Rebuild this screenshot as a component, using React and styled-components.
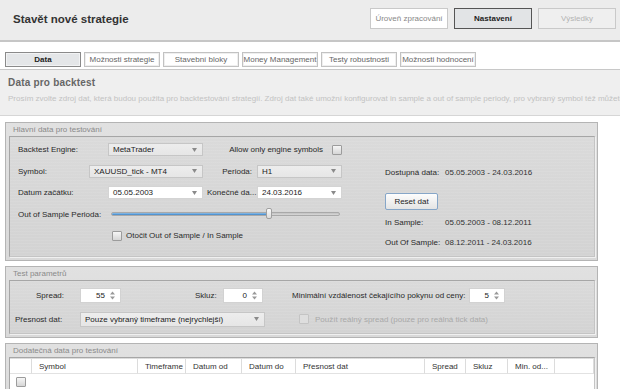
import React from 'react';
import styled, { createGlobalStyle } from 'styled-components';

const GlobalStyle = createGlobalStyle`
  * { box-sizing: border-box; }
  body {
    margin: 0;
    background: #fff;
    font-family: "Liberation Sans", Arial, sans-serif;
    font-size: 8px;
    color: #333;
  }
`;

const Page = styled.div`
  width: 620px;
  height: 389px;
  overflow: hidden;
`;

const Header = styled.div`
  height: 42px;
  display: flex;
  align-items: center;
  justify-content: space-between;
  padding: 0 4px 3px 13px;
  background: #ececec;
  border-bottom: 2px solid #c6c6c6;
`;

const Title = styled.h1`
  margin: 0;
  font-size: 11.5px;
  font-weight: bold;
  color: #333;
`;

const HeaderButtons = styled.div`
  display: flex;
  gap: 6px;
`;

const HeadButton = styled.div`
  width: 78px;
  height: 21px;
  display: flex;
  align-items: center;
  justify-content: center;
  font-size: 8px;
  border: 1px solid ${({ $variant }) => ($variant === 'active' ? '#555' : '#c9c9c9')};
  background: ${({ $variant }) =>
    $variant === 'active' ? '#e2e4e6' : $variant === 'done' ? '#fff' : '#efefef'};
  color: ${({ $variant }) =>
    $variant === 'active' ? '#222' : $variant === 'done' ? '#888' : '#b3b3b3'};
  font-weight: ${({ $variant }) => ($variant === 'active' ? 'bold' : 'normal')};
`;

const TabBar = styled.div`
  display: flex;
  gap: 3px;
  padding: 10px 5px 2px;
  border-bottom: 1px solid #c8c8c8;
`;

const Tab = styled.div`
  width: 76px;
  height: 15px;
  display: flex;
  align-items: center;
  justify-content: center;
  font-size: 8px;
  white-space: nowrap;
  border: 1px solid ${({ $active }) => ($active ? '#8a8a8a' : '#c2c2c2')};
  box-shadow: inset 0 0 0 1px ${({ $active }) => ($active ? '#f2f3f4' : '#efefef')};
  background: ${({ $active }) => ($active ? '#e4e6e8' : '#fff')};
  color: ${({ $active }) => ($active ? '#222' : '#666')};
  font-weight: ${({ $active }) => ($active ? 'bold' : 'normal')};
`;

const Intro = styled.div`
  height: 46px;
  padding: 7px 8px 0;
  background: #efefef;
  border-bottom: 1px solid #d6d6d6;
  overflow: hidden;
`;

const IntroTitle = styled.div`
  font-size: 10px;
  font-weight: bold;
  color: #666;
  letter-spacing: 0.2px;
`;

const IntroText = styled.div`
  margin-top: 6px;
  font-size: 8px;
  color: #c2c2c2;
  white-space: nowrap;
`;

const Panels = styled.div`
  display: flex;
  flex-direction: column;
  gap: 5px;
  margin: 6px 22px 0 5px;
`;

const Panel = styled.div`
  border: 1px solid #b4b4b4;
  background: linear-gradient(#e1e1e1, #d9d9d9);
  padding: 0 2px 3px 3px;
`;

const Caption = styled.div`
  height: 13px;
  line-height: 13px;
  padding-left: 4px;
  font-size: 8px;
  color: #8a8a8a;
`;

const Body = styled.div`
  height: ${({ $h }) => $h}px;
  border: 1px solid #a6a6a6;
  border-right-color: #c4c4c4;
  border-bottom-color: #c4c4c4;
  box-shadow: 1px 1px 0 #f0f0f0;
  background:
    repeating-linear-gradient(0deg, rgba(255, 255, 255, 0.07) 0 1px, transparent 1px 3px),
    linear-gradient(#dadada, #d3d3d3);
  overflow: hidden;
`;

const MainGrid = styled.div`
  display: flex;
`;

const LeftCol = styled.div`
  width: 375px;
  padding: 2px 0 0 8px;
`;

const RightCol = styled.div`
  display: flex;
  flex-direction: column;
  padding-top: 25px;
`;

const Row = styled.div`
  height: ${({ $h }) => $h || 21.5}px;
  display: flex;
  align-items: center;
  padding-left: ${({ $pl }) => $pl || 0}px;
  white-space: nowrap;
`;

const Label = styled.div`
  width: ${({ $w }) => $w}px;
  flex: none;
  color: #2a2a2a;
  text-align: ${({ $right }) => ($right ? 'right' : 'left')};
  padding-right: ${({ $pr }) => $pr || 0}px;
  padding-left: ${({ $pl }) => $pl || 0}px;
  margin-left: ${({ $ml }) => $ml || 0}px;
  overflow: hidden;
`;

const Combo = styled.div`
  width: ${({ $w }) => $w}px;
  height: ${({ $h }) => $h || 13}px;
  flex: none;
  display: flex;
  align-items: center;
  justify-content: space-between;
  padding: 0 5px 0 4px;
  border: 1px solid ${({ $white }) => ($white ? '#d4d4d4' : '#c6c6c6')};
  background: ${({ $white }) => ($white ? '#fff' : 'linear-gradient(#ededed, #e6e6e6)')};
  color: #222;
`;

const Arrow = () => (
  <svg width="5" height="4" viewBox="0 0 5 4">
    <path d="M0 0 L5 0 L2.5 4 Z" fill="#8a8a8a" />
  </svg>
);

const Check = styled.div`
  width: 10px;
  height: 10px;
  flex: none;
  margin-left: ${({ $ml }) => $ml || 0}px;
  border: 1px solid ${({ $disabled }) => ($disabled ? '#c4c4c4' : '#9c9c9c')};
  border-radius: 1px;
  background: ${({ $disabled }) =>
    $disabled ? '#dedede' : 'linear-gradient(#f6f6f6, #d6d6d6)'};
`;

const CheckText = styled.span`
  margin-left: ${({ $ml }) => $ml || 4}px;
  color: ${({ $disabled }) => ($disabled ? '#a9a9a9' : '#2a2a2a')};
`;

const Slider = styled.div`
  width: 229px;
  height: 4px;
  flex: none;
  position: relative;
  border-radius: 2px;
  border: 1px solid #a9a9a9;
  background: linear-gradient(#c2c2c2, #d8d8d8);
`;

const SliderFill = styled.div`
  height: 100%;
  border-radius: 2px;
  background: linear-gradient(#8fc0ea, #3f86c8);
`;

const Thumb = styled.div`
  position: absolute;
  top: -5px;
  width: 6px;
  height: 11px;
  margin-left: -3px;
  border: 1px solid #a0a0a0;
  border-radius: 2px;
  background: linear-gradient(#fbfbfb, #dcdcdc);
`;

const InfoRow = styled.div`
  height: 20px;
  display: flex;
  align-items: center;
  margin-top: ${({ $mt }) => $mt || 0}px;
  white-space: nowrap;
`;

const InfoLabel = styled.div`
  width: 60px;
  color: #2a2a2a;
`;

const ResetButton = styled.div`
  width: 53px;
  height: 17px;
  margin-top: 11px;
  display: flex;
  align-items: center;
  justify-content: center;
  border: 1px solid #86a6c8;
  border-radius: 2px;
  background: linear-gradient(#fdfdfd, #e4e4e4);
  color: #222;
`;

const Spinner = styled.div`
  width: ${({ $w }) => $w}px;
  height: 15px;
  flex: none;
  display: flex;
  align-items: center;
  justify-content: flex-end;
  padding-right: 5px;
  border: 1px solid #d2d2d2;
  background: #fff;
  color: #222;
`;

const SpinArrows = () => (
  <svg width="5" height="9" viewBox="0 0 5 9" style={{ marginLeft: 5 }}>
    <path d="M0 3.5 L2.5 0.5 L5 3.5 Z" fill="#999" />
    <path d="M0 5.5 L2.5 8.5 L5 5.5 Z" fill="#999" />
  </svg>
);

const ParamBody = styled.div`
  padding-top: 2px;
`;

const Table = styled.div`
  margin-top: 1px;
  display: grid;
  grid-template-columns: 22px 106px 48px 56px 54px 129px 41px 42px 47px 1fr;
  background: #fff;
`;

const HeadCell = styled.div`
  height: 15px;
  display: flex;
  align-items: center;
  padding-left: 7px;
  color: #333;
  white-space: nowrap;
  border-right: 1px solid #dcdcdc;
  border-bottom: 1px solid #e2e2e2;
`;

const Cell = styled.div`
  height: 16px;
  display: flex;
  align-items: center;
  padding-left: 6px;
`;

const columns = ['', 'Symbol', 'Timeframe', 'Datum od', 'Datum do', 'Přesnost dat', 'Spread', 'Skluz', 'Min. od...', ''];

const App = () => {
  const sliderPos = 157;

  return (
    <Page>
      <GlobalStyle />
      <Header>
        <Title>Stavět nové strategie</Title>
        <HeaderButtons>
          <HeadButton $variant="done">Úroveň zpracování</HeadButton>
          <HeadButton $variant="active">Nastavení</HeadButton>
          <HeadButton $variant="disabled">Výsledky</HeadButton>
        </HeaderButtons>
      </Header>

      <TabBar>
        <Tab $active>Data</Tab>
        <Tab>Možnosti strategie</Tab>
        <Tab>Stavební bloky</Tab>
        <Tab>Money Management</Tab>
        <Tab>Testy robustnosti</Tab>
        <Tab>Možnosti hodnocení</Tab>
      </TabBar>

      <Intro>
        <IntroTitle>Data pro backtest</IntroTitle>
        <IntroText>
          Prosím zvolte zdroj dat, která budou použita pro backtestování strategií. Zdroj dat také umožní konfigurovat in sample a out of sample periody, pro vybraný symbol též můžete nastavit
        </IntroText>
      </Intro>

      <Panels>
        <Panel>
          <Caption>Hlavní data pro testování</Caption>
          <Body $h={121}>
            <MainGrid>
              <LeftCol>
                <Row>
                  <Label $w={90}>Backtest Engine:</Label>
                  <Combo $w={95}>MetaTrader<Arrow /></Combo>
                  <Label $w={129} $right $pr={9}>Allow only engine symbols</Label>
                  <Check />
                </Row>
                <Row>
                  <Label $w={71}>Symbol:</Label>
                  <Combo $w={114}>XAUUSD_tick - MT4<Arrow /></Combo>
                  <Label $w={54} $right $pr={5}>Perioda:</Label>
                  <Combo $w={85}>H1<Arrow /></Combo>
                </Row>
                <Row>
                  <Label $w={90}>Datum začátku:</Label>
                  <Combo $w={95} $white>05.05.2003<Arrow /></Combo>
                  <Label $w={54} $pl={4}>Konečné da...</Label>
                  <Combo $w={85} $white>24.03.2016<Arrow /></Combo>
                </Row>
                <Row>
                  <Label $w={93}>Out of Sample Perioda:</Label>
                  <Slider>
                    <SliderFill style={{ width: sliderPos }} />
                    <Thumb style={{ left: sliderPos }} />
                  </Slider>
                </Row>
                <Row $pl={94}>
                  <Check />
                  <CheckText>Otočit Out of Sample / In Sample</CheckText>
                </Row>
              </LeftCol>
              <RightCol>
                <InfoRow>
                  <InfoLabel>Dostupná data:</InfoLabel>
                  05.05.2003 - 24.03.2016
                </InfoRow>
                <ResetButton>Reset dat</ResetButton>
                <InfoRow $mt={2}>
                  <InfoLabel>In Sample:</InfoLabel>
                  05.05.2003 - 08.12.2011
                </InfoRow>
                <InfoRow>
                  <InfoLabel>Out Of Sample:</InfoLabel>
                  08.12.2011 - 24.03.2016
                </InfoRow>
              </RightCol>
            </MainGrid>
          </Body>
        </Panel>

        <Panel>
          <Caption>Test parametrů</Caption>
          <Body $h={54}>
            <ParamBody>
              <Row $h={24} $pl={26}>
                <Label $w={44}>Spread:</Label>
                <Spinner $w={41}>55<SpinArrows /></Spinner>
                <Label $w={28} $ml={74}>Skluz:</Label>
                <Spinner $w={40}>0<SpinArrows /></Spinner>
                <Label $w={177} $ml={29}>Minimální vzdálenost čekajícího pokynu od ceny:</Label>
                <Spinner $w={36}>5<SpinArrows /></Spinner>
              </Row>
              <Row $h={24} $pl={5}>
                <Label $w={65}>Přesnost dat:</Label>
                <Combo $w={185} $h={15}>Pouze vybraný timeframe (nejrychlejší)<Arrow /></Combo>
                <Check $disabled $ml={34} />
                <CheckText $disabled $ml={6}>Použít reálný spread (pouze pro reálná tick data)</CheckText>
              </Row>
            </ParamBody>
          </Body>
        </Panel>

        <Panel>
          <Caption>Dodatečná data pro testování</Caption>
          <Body $h={60}>
            <Table>
              {columns.map((c, i) => (
                <HeadCell key={i}>{c}</HeadCell>
              ))}
              <Cell><Check /></Cell>
            </Table>
          </Body>
        </Panel>
      </Panels>
    </Page>
  );
};

export default App;
